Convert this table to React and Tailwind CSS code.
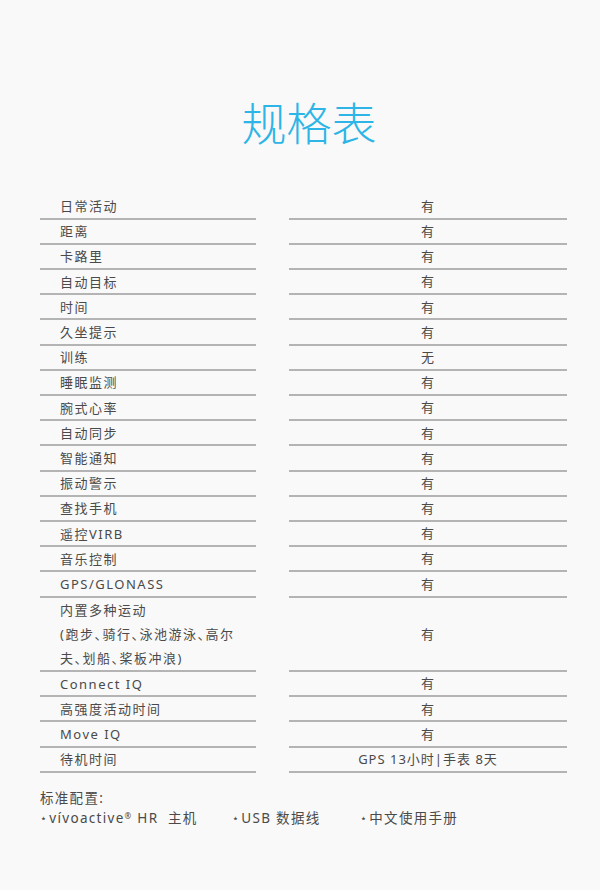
import React from 'react';

const rows = [
  ['日常活动', '有'],
  ['距离', '有'],
  ['卡路里', '有'],
  ['自动目标', '有'],
  ['时间', '有'],
  ['久坐提示', '有'],
  ['训练', '无'],
  ['睡眠监测', '有'],
  ['腕式心率', '有'],
  ['自动同步', '有'],
  ['智能通知', '有'],
  ['振动警示', '有'],
  ['查找手机', '有'],
  ['遥控VIRB', '有'],
  ['音乐控制', '有'],
  ['GPS/GLONASS', '有'],
  [['内置多种运动', '(跑步、骑行、泳池游泳、高尔', '夫、划船、桨板冲浪)'], '有'],
  ['Connect IQ', '有'],
  ['高强度活动时间', '有'],
  ['Move IQ', '有'],
  ['待机时间', 'GPS 13小时|手表 8天'],
];

const font = { fontFamily: '"Noto Sans", "Noto Sans CJK SC", sans-serif' };

const Star = () => <span className="text-[11px] align-[1px] mr-[1px]">⋆</span>;

export default function App() {
  return (
    <div className="w-[600px] h-[890px] bg-[#f9f9f9] text-[#4a4a4a] overflow-hidden" style={font}>
      <h1 className="pt-[92px] pl-[18px] h-[194.5px] text-center text-[45px] leading-[64px] font-light text-[#2cb5e6]">
        规格表
      </h1>

      <div className="grid grid-cols-[216px_278px] gap-x-[33px] pl-[40px]">
        {rows.map(([label, value], i) => {
          const multi = Array.isArray(label);
          return (
            <React.Fragment key={i}>
              <div
                className={`border-b-2 border-[#b4b4b4] pl-[20px] text-[13px] tracking-[1.5px] flex flex-col justify-center whitespace-nowrap ${multi ? 'h-[74.5px]' : 'h-[25.2px]'}`}
              >
                {multi ? label.map(l => (
                  <div key={l} className="leading-[24px] [font-feature-settings:'halt']">{l}</div>
                )) : <span className="leading-[23px] pt-[1px]">{label}</span>}
              </div>
              <div
                className={`border-b-2 border-[#b4b4b4] text-[13px] tracking-[1px] flex items-center justify-center ${multi ? 'h-[74.5px]' : 'h-[25.2px]'}`}
              >
                <span className="pt-[1px]">{value}</span>
              </div>
            </React.Fragment>
          );
        })}
      </div>

      <div className="pl-[40px] pt-[15px] text-[13.5px] tracking-[1.3px] leading-[20px]">
        <div>标准配置:</div>
        <div className="flex">
          <span className="w-[192px]"><Star />vívoactive<sup className="text-[8px]">®</sup> HR&nbsp; 主机</span>
          <span className="w-[128px]"><Star />USB 数据线</span>
          <span><Star />中文使用手册</span>
        </div>
      </div>
    </div>
  );
}
